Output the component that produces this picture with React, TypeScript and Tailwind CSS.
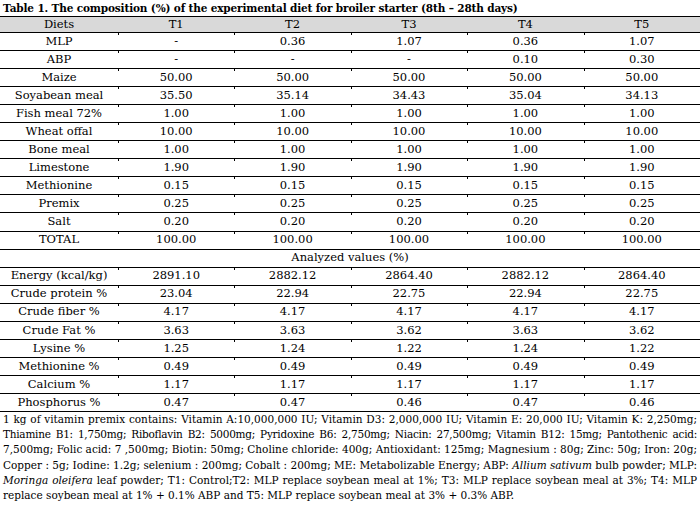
import React from "react";

const serif = "font-['DejaVu_Serif',serif]";

const composition: string[][] = [
  ["MLP", "-", "0.36", "1.07", "0.36", "1.07"],
  ["ABP", "-", "-", "-", "0.10", "0.30"],
  ["Maize", "50.00", "50.00", "50.00", "50.00", "50.00"],
  ["Soyabean meal", "35.50", "35.14", "34.43", "35.04", "34.13"],
  ["Fish meal 72%", "1.00", "1.00", "1.00", "1.00", "1.00"],
  ["Wheat offal", "10.00", "10.00", "10.00", "10.00", "10.00"],
  ["Bone meal", "1.00", "1.00", "1.00", "1.00", "1.00"],
  ["Limestone", "1.90", "1.90", "1.90", "1.90", "1.90"],
  ["Methionine", "0.15", "0.15", "0.15", "0.15", "0.15"],
  ["Premix", "0.25", "0.25", "0.25", "0.25", "0.25"],
  ["Salt", "0.20", "0.20", "0.20", "0.20", "0.20"],
  ["TOTAL", "100.00", "100.00", "100.00", "100.00", "100.00"],
];

const analyzed: string[][] = [
  ["Energy (kcal/kg)", "2891.10", "2882.12", "2864.40", "2882.12", "2864.40"],
  ["Crude protein %", "23.04", "22.94", "22.75", "22.94", "22.75"],
  ["Crude fiber %", "4.17", "4.17", "4.17", "4.17", "4.17"],
  ["Crude Fat %", "3.63", "3.63", "3.62", "3.63", "3.62"],
  ["Lysine %", "1.25", "1.24", "1.22", "1.24", "1.22"],
  ["Methionine %", "0.49", "0.49", "0.49", "0.49", "0.49"],
  ["Calcium %", "1.17", "1.17", "1.17", "1.17", "1.17"],
  ["Phosphorus %", "0.47", "0.47", "0.46", "0.47", "0.46"],
];

function Row({ cells }: { cells: string[] }) {
  return (
    <div className="grid grid-cols-[118px_repeat(5,1fr)] h-[18.05px] border-b border-black items-center">
      {cells.map((c, i) => (
        <div
          key={i}
          className={
            "relative h-full flex items-center justify-center whitespace-nowrap" +
            (i > 0
              ? " before:absolute before:left-0 before:top-0 before:h-[2px] before:w-px before:bg-black before:content-['']"
              : "")
          }
        >
          {c}
        </div>
      ))}
    </div>
  );
}

const justified = "text-justify [text-align-last:justify]";

export default function App() {
  return (
    <div className={`w-[700px] h-[508px] bg-white text-black overflow-hidden ${serif}`}>
      {/* caption */}
      <div className="h-[16px] pl-[3px] text-[10.5px] leading-[16px] font-bold tracking-[-0.15px] whitespace-nowrap">
        Table 1. The composition (%) of the experimental diet for broiler starter (8th – 28th days)
      </div>

      <div className="text-[11.5px] leading-none">
        <div className="grid grid-cols-[118px_repeat(5,1fr)] h-[17px] border-y border-black bg-[#d9d9d9] items-center">
          {["Diets", "T1", "T2", "T3", "T4", "T5"].map((h) => (
            <div key={h} className="text-center">
              {h}
            </div>
          ))}
        </div>

        {composition.map((r) => (
          <Row key={r[0]} cells={r} />
        ))}

        <div className="h-[18.05px] border-b border-black flex items-center justify-center">
          Analyzed values (%)
        </div>

        {analyzed.map((r) => (
          <Row key={r[0]} cells={r} />
        ))}
      </div>

      {/* footnote */}
      <div className="px-[3px] text-[10.5px] leading-[15.2px]">
        <div className={justified}>
          1 kg of vitamin premix contains: Vitamin A:10,000,000 IU; Vitamin D3: 2,000,000 IU; Vitamin E: 20,000 IU; Vitamin K: 2,250mg;
        </div>
        <div className={`${justified} tracking-[-0.25px] whitespace-nowrap`}>
          Thiamine B1: 1,750mg; Riboflavin B2: 5000mg; Pyridoxine B6: 2,750mg; Niacin: 27,500mg; Vitamin B12: 15mg; Pantothenic acid:
        </div>
        <div className={justified}>
          7,500mg; Folic acid: 7 ,500mg; Biotin: 50mg; Choline chloride: 400g; Antioxidant: 125mg; Magnesium : 80g; Zinc: 50g; Iron: 20g;
        </div>
        <div className={justified}>
          Copper : 5g; Iodine: 1.2g; selenium : 200mg; Cobalt : 200mg; ME: Metabolizable Energy; ABP: <i>Allium sativum</i> bulb powder; MLP:
        </div>
        <div className={justified}>
          <i>Moringa oleifera</i> leaf powder; T1: Control;T2: MLP replace soybean meal at 1%; T3: MLP replace soybean meal at 3%; T4: MLP
        </div>
        <div>replace soybean meal at 1% + 0.1% ABP and T5: MLP replace soybean meal at 3% + 0.3% ABP.</div>
      </div>
    </div>
  );
}
